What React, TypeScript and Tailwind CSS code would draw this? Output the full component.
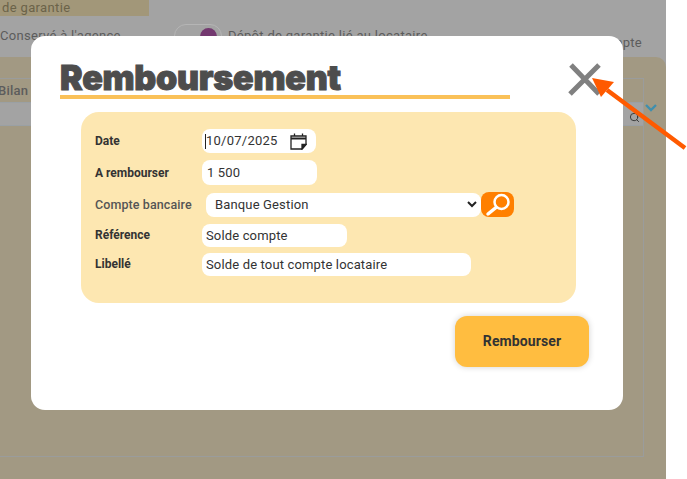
import { Search } from "lucide-react";

const labelClass = "text-[12px] font-bold text-[#333] leading-none";
const fieldClass = "bg-white rounded-[8px] text-[13px] tracking-[0.15px] text-[#333] flex items-center";

function SearchIcon() {
  return (
    <svg width="33" height="25" viewBox="0 0 33 25">
      <rect width="33" height="25" rx="8" fill="#ff8000" />
      <circle cx="20.5" cy="10" r="7" fill="none" stroke="#fff" strokeWidth="2.5" />
      <path d="M15 15.5 L7 22" stroke="#fff" strokeWidth="3.5" strokeLinecap="round" />
    </svg>
  );
}

function CalendarIcon() {
  return (
    <svg width="17" height="17" viewBox="0 0 17 17" fill="none" stroke="#222" strokeWidth="1.3">
      <path d="M1 3 H16 V11.5 L12 16 H1 Z" />
      <path d="M1 5.5 H16" strokeWidth="2" />
      <path d="M4.5 0.5 V3 M12.5 0.5 V3" />
      <path d="M16 11.5 H12 V16 Z" fill="#222" />
    </svg>
  );
}

function Background() {
  return (
    <div className="w-[666px] h-[479px] bg-[#a3a3a3] flex flex-col text-[#5c5c5c] text-[13px]">
      <div className="w-[149px] h-[16px] bg-[#a29779] text-[#6b6349] leading-[15px] pl-[2px] tracking-[0.35px]">de garantie</div>
      <div className="h-[41px] flex items-start pt-[12px] tracking-[0.3px]">
        <span className="w-[174px] leading-[16px]">Conservé à l'agence</span>
        <span className="w-[54px] h-[20px] -mt-[1px]" />
        <span className="leading-[16px] flex-1">Dépôt de garantie lié au locataire</span>
        <span className="leading-[16px] mt-[7px] pr-[24px]">compte</span>
      </div>
      <div className="flex-1 bg-[#a29983] rounded-tr-[10px] pt-[21px] flex items-start">
        <div className="w-[644px] h-[379px] border-t border-r border-b border-[#9a9c9c] flex flex-col">
          <div className="h-[24px] border-b border-[#9aa0a4] text-[13px] font-medium text-[#5c5c5c] leading-[24px] tracking-[0.2px] -ml-[2px]">Bilan</div>
          <div className="h-[23px] bg-[#a3a3a3] border-b border-[#9aa0a4] flex items-center justify-end pr-[3px] pt-[7px]">
            <Search size={11} color="#333" />
          </div>
        </div>
        <svg className="ml-[1px] mt-[26px]" width="12" height="8" viewBox="0 0 12 8" fill="none" stroke="#3f8fae" strokeWidth="2.4">
          <path d="M1 1 L6 6 L11 1" />
        </svg>
      </div>
    </div>
  );
}

export default function App() {
  return (
    <div className="relative w-[687px] h-[479px] bg-white overflow-hidden" style={{ fontFamily: "Roboto, sans-serif" }}>
      <Background />

      {/* toggle peeking out above the dialog */}
      <div className="absolute left-[174px] top-[24px] w-[48px] h-[24px] rounded-full border border-[#b5b5b5] bg-[#a3a3a3]">
        <div className="absolute right-[4px] top-[3px] w-[17px] h-[17px] rounded-full bg-[#73386f]" />
      </div>

      <div className="absolute left-[31px] top-[36px] w-[592px] h-[374px] bg-white rounded-[14px] pt-[24px] pl-[29px] pr-[34px] flex flex-col">
        <div className="w-[450px] h-[39px] border-b-[4px] border-[#fac158] text-[34px] font-black text-[#4d4d4d] leading-[36px] tracking-[-0.25px] whitespace-nowrap [-webkit-text-stroke:1px_#4d4d4d]" style={{ fontFamily: "Inter, sans-serif" }}>
          Remboursement
        </div>

        <div className="mt-[13px] ml-[21px] w-[495px] h-[191px] bg-[#fde7b1] rounded-[18px] pl-[14px] pt-[17px] flex flex-col">
          <div className="flex items-center h-[24px]">
            <span className={`${labelClass} w-[107px]`}>Date</span>
            <div className={`${fieldClass} w-[114px] h-[24px] pl-[3px]`}>
              <span className="w-px h-[15px] bg-[#222]" />
              <span className="flex-1 tracking-[0.25px]">10/07/2025</span>
              <span className="mr-[9px]"><CalendarIcon /></span>
            </div>
          </div>
          <div className="flex items-center h-[25px] mt-[7px]">
            <span className={`${labelClass} w-[107px]`}>A rembourser</span>
            <div className={`${fieldClass} w-[115px] h-[25px] pl-[5px]`}>1 500</div>
          </div>
          <div className="flex items-center h-[25px] mt-[7px]">
            <span className="text-[12.5px] font-medium text-[#555] leading-none w-[111px] tracking-[0.1px] whitespace-nowrap pt-[2px]">Compte bancaire</span>
            <div className={`${fieldClass} w-[275px] h-[24px] pl-[9px] pr-[4px] justify-between`}>
              Banque Gestion
              <svg width="10" height="7" viewBox="0 0 10 7" fill="none" stroke="#222" strokeWidth="2">
                <path d="M1 1 L5 5 L9 1" />
              </svg>
            </div>
            <SearchIcon />
          </div>
          <div className="flex items-center h-[23px] mt-[7px]">
            <span className={`${labelClass} w-[107px] pb-[2px]`}>Référence</span>
            <div className={`${fieldClass} w-[145px] h-[23px] pl-[4px]`}>Solde compte</div>
          </div>
          <div className="flex items-center h-[23px] mt-[6px]">
            <span className={`${labelClass} w-[107px] pb-[2px]`}>Libellé</span>
            <div className={`${fieldClass} w-[269px] h-[23px] pl-[4px]`}>Solde de tout compte locataire</div>
          </div>
        </div>

        <div className="flex justify-end mt-[13px]">
          <button className="w-[134px] h-[51px] bg-[#ffbd40] rounded-[12px] text-[14px] font-bold text-[#333] tracking-[0.1px] shadow-[0_0_6px_rgba(0,0,0,0.18)]">
            Rembourser
          </button>
        </div>
      </div>

      {/* close cross */}
      <svg className="absolute left-[566px] top-[61px]" width="38" height="38" viewBox="0 0 38 38" stroke="#808080" strokeWidth="5">
        <path d="M5 4 L33 33 M33 4 L4 33" />
      </svg>

      {/* annotation arrow */}
      <svg className="absolute left-[585px] top-[70px]" width="102" height="84" viewBox="0 0 102 84">
        <path d="M100 78 L22 20" stroke="#ff5a00" strokeWidth="4.5" />
        <path d="M7 8 L29 12 L16 27 Z" fill="#ff5a00" />
      </svg>
    </div>
  );
}
